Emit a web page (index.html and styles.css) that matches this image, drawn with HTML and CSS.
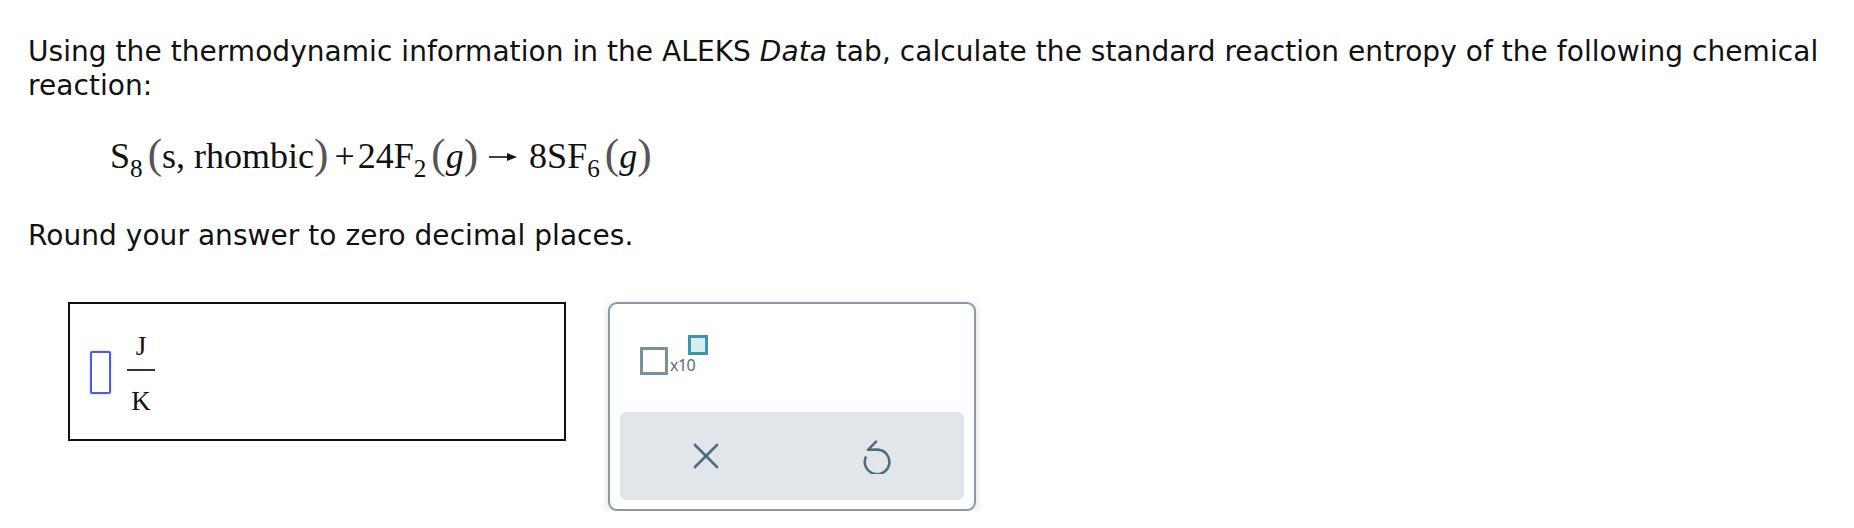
FILE: index.html
```html
<!DOCTYPE html>
<html lang="en">
<head>
<meta charset="utf-8">
<title>ALEKS question</title>
<link rel="stylesheet" href="styles.css">
</head>
<body>
<main class="page">
  <p class="prompt"><span>Using the thermodynamic information in the ALEKS</span> <i>Data</i> <span>tab, calculate the standard reaction entropy of the following chemical</span> <span>reaction:</span></p>

  <div class="equation">
    <span>S</span><sub>8</sub><span class="paren pl">(</span><span>s, rhombic</span><span class="paren">)</span><span class="op">+</span><span>24F</span><sub>2</sub><span class="paren pl">(</span><i>g</i><span class="paren">)</span><svg class="arrow" width="28" height="10" viewBox="0 0 28 10" aria-hidden="true"><line x1="0" y1="5" x2="20" y2="5" stroke="#111" stroke-width="1.6"/><polygon points="18,1 28,5 18,9" fill="#111"/></svg><span>8SF</span><sub>6</sub><span class="paren pl">(</span><i>g</i><span class="paren">)</span>
  </div>

  <p class="round">Round your answer to zero decimal places.</p>

  <div class="answer-row">
    <div class="answer-box">
      <span class="slot"></span>
      <span class="frac">
        <span class="num">J</span>
        <span class="bar"></span>
        <span class="den">K</span>
      </span>
    </div>

    <div class="keypad">
      <div class="keys">
        <button class="sci" type="button" aria-label="scientific notation">
          <span class="sci-box"></span>
          <span class="sci-x">x10</span>
          <span class="sci-exp"></span>
        </button>
      </div>
      <div class="actions">
        <button class="act" type="button" aria-label="clear">
          <svg width="26" height="26" viewBox="0 0 26 26"><path d="M2 2 L24 24 M24 2 L2 24" stroke="#4e6c7a" stroke-width="2.6" stroke-linecap="round" fill="none"/></svg>
        </button>
        <button class="act" type="button" aria-label="undo">
          <svg class="undo" width="30" height="34" viewBox="0 0 30 34"><path d="M13 1.6 L5 9.8 L14.5 9.6 A12.3 12.3 0 1 1 2.6 17.5" stroke="#4e6c7a" stroke-width="2.6" stroke-linecap="round" stroke-linejoin="round" fill="none"/></svg>
        </button>
      </div>
    </div>
  </div>
</main>
</body>
</html>
```

FILE: styles.css
```css
html, body {
  margin: 0;
  padding: 0;
  background: #ffffff;
}

.page {
  padding: 35px 0 0 28px;
  font-family: "DejaVu Sans", Verdana, sans-serif;
  font-size: 28px;
  letter-spacing: 0.05px;
  color: #111;
}

.prompt {
  margin: 0;
  line-height: 34px;
}

.equation {
  margin: 31px 0 0 82px;
  height: 44px;
  font-family: "Liberation Serif", "Times New Roman", serif;
  font-size: 36px;
  line-height: 44px;
  letter-spacing: 0;
  white-space: nowrap;
  color: #111;
}

.equation sub {
  font-size: 0.7em;
  vertical-align: -9px;
  line-height: 0;
}

.equation .paren {
  font-size: 1.2em;
  color: #555;
  line-height: 0;
}

.equation .pl {
  margin-left: 5px;
}

.equation .op {
  margin: 0 3px 0 6px;
}

.equation .arrow {
  margin: 0 12px 0 11px;
  vertical-align: 6px;
}

.round {
  margin: 41px 0 0;
  line-height: 34px;
}

.answer-row {
  display: flex;
  align-items: flex-start;
  gap: 42px;
  margin: 49px 0 0 40px;
  letter-spacing: 0;
}

.answer-box {
  box-sizing: border-box;
  width: 498px;
  height: 139px;
  border: 2px solid #111;
  display: flex;
  align-items: center;
  padding-left: 20px;
  gap: 16px;
}

.slot {
  box-sizing: border-box;
  width: 21px;
  height: 43px;
  border: 2px solid #4a5cf7;
  border-radius: 2px;
  box-shadow: 0 0 2px rgba(74, 92, 247, 0.45);
  margin-top: 2px;
}

.frac {
  display: flex;
  flex-direction: column;
  align-items: center;
  font-family: "Liberation Serif", "Times New Roman", serif;
  font-size: 27px;
  color: #111;
  width: 28px;
  margin-top: 3px;
}

.num {
  line-height: 28px;
}

.bar {
  width: 28px;
  height: 2px;
  background: #333;
  margin: 9px 0 16px;
}

.den {
  line-height: 28px;
}

.keypad {
  box-sizing: border-box;
  width: 368px;
  height: 209px;
  border: 2px solid #889ca6;
  border-radius: 9px;
  box-shadow: 0 2px 8px rgba(40, 60, 70, 0.18);
  background: #fff;
  padding: 0 10px 9px;
  display: flex;
  flex-direction: column;
}

.keys {
  flex: 1;
  display: flex;
  align-items: flex-start;
  padding: 31px 0 0 20px;
}

.sci {
  border: 0;
  background: none;
  padding: 0;
  position: relative;
  display: flex;
  align-items: flex-end;
  height: 40px;
  cursor: pointer;
}

.sci-box {
  box-sizing: border-box;
  width: 28px;
  height: 28px;
  border: 3px solid #7a919c;
}

.sci-x {
  font-family: "Open Sans", "Liberation Sans", sans-serif;
  font-size: 16px;
  line-height: 16px;
  color: #4c6571;
  margin-left: 2px;
  letter-spacing: -0.5px;
  padding-bottom: 2px;
}

.sci-exp {
  position: absolute;
  left: 48px;
  top: 0;
  box-sizing: border-box;
  width: 20px;
  height: 20px;
  border: 3px solid #3b95b0;
  background: #d4edf3;
}

.actions {
  height: 88px;
  background: #e1e6e9;
  border-radius: 6px;
  display: grid;
  grid-template-columns: 1fr 1fr;
}

.act {
  border: 0;
  background: none;
  display: flex;
  align-items: center;
  justify-content: center;
  padding: 0;
  cursor: pointer;
}

.undo {
  margin-top: 2px;
}
```
